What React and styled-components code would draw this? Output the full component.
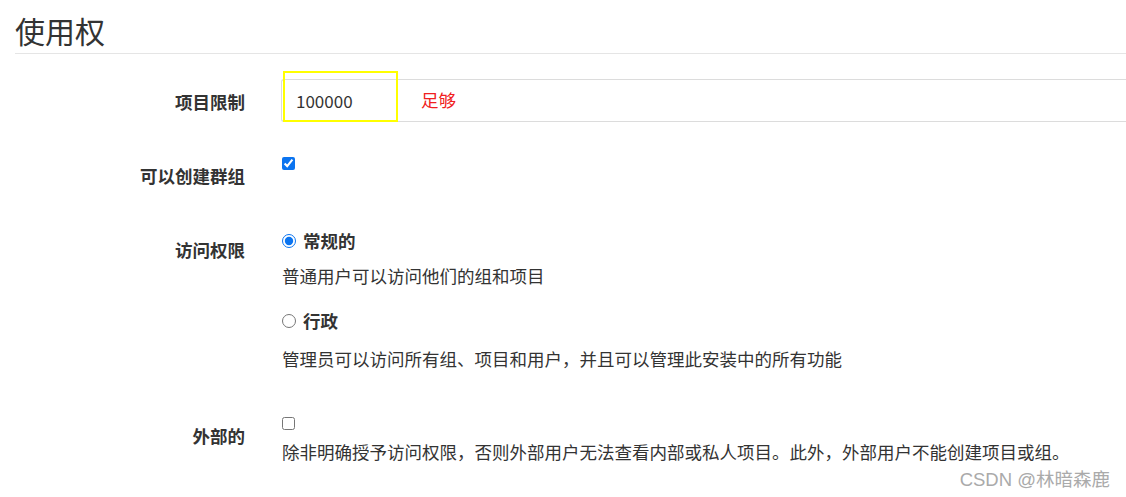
import React from "react"
import styled, { createGlobalStyle } from "styled-components"

const GlobalStyle = createGlobalStyle`
  html, body {
    margin: 0;
    padding: 0;
    background: #fff;
  }
  body {
    font-family: "Noto Sans CJK SC", "Microsoft YaHei", sans-serif;
    color: #333;
    overflow: hidden;
  }
`

const Page = styled.div`
  position: relative;
  width: 1126px;
  height: 497px;
  padding-left: 15px;
  box-sizing: border-box;
`

const Title = styled.h3`
  margin: 0;
  padding-top: 12px;
  height: 41px;
  font-size: 30px;
  line-height: 36px;
  font-weight: 400;
  color: #333;
  border-bottom: 1px solid #e5e5e5;
`

const Form = styled.div`
  display: flex;
  flex-direction: column;
`

const Row = styled.div`
  display: grid;
  grid-template-columns: 230px 1fr;
  column-gap: 37px;
  margin-top: ${props => props.top}px;
`

const Label = styled.div`
  text-align: right;
  font-size: 17.5px;
  line-height: 24px;
  font-weight: 700;
  padding-top: ${props => props.pad}px;
  color: #333;
`

const Controls = styled.div`
  display: flex;
  flex-direction: column;
  align-items: flex-start;
`

const InputWrap = styled.div`
  position: relative;
  display: flex;
  align-items: center;
  width: 100%;
`

const TextInput = styled.div`
  position: relative;
  width: calc(100% + 1px);
  height: 43px;
  box-sizing: border-box;
  border: 1px solid #dcdcdc;
  border-right: none;
  border-radius: 3px 0 0 3px;
  display: flex;
  align-items: center;
  padding-left: 14px;
  margin-left: -1px;
  font-size: 17px;
  color: #333;
`

const Highlight = styled.div`
  position: absolute;
  left: 1px;
  top: -8px;
  width: 115px;
  height: 51px;
  box-sizing: border-box;
  border: 2px solid #ffff00;
  pointer-events: none;
`

const Note = styled.span`
  position: absolute;
  left: 139px;
  top: 9px;
  font-size: 17.5px;
  line-height: 24px;
  color: #f02020;
`

const Check = styled.input`
  margin: 0;
  width: 13px;
  height: 13px;
  accent-color: #0b74f0;
`

const Option = styled.label`
  display: flex;
  align-items: center;
  gap: 7px;
  font-size: 17.5px;
  line-height: 24px;
  font-weight: 700;
  margin-top: ${props => props.top || 0}px;
`

const Radio = styled.input`
  margin: 0;
  width: 14px;
  height: 14px;
  accent-color: #0b74f0;
`

const Help = styled.p`
  margin: ${props => props.top}px 0 0;
  font-size: 17.5px;
  line-height: 24px;
  color: #333;
`

const Watermark = styled.div`
  position: absolute;
  right: 16px;
  bottom: 6px;
  font-family: "Liberation Sans", "Noto Sans CJK SC", sans-serif;
  font-size: 18.5px;
  color: #aaa;
`

const App = () => (
  <Page>
    <GlobalStyle />
    <Title>使用权</Title>
    <Form>
      <Row top={25}>
        <Label pad={11}>项目限制</Label>
        <InputWrap>
          <TextInput>100000</TextInput>
          <Highlight />
          <Note>足够</Note>
        </InputWrap>
      </Row>
      <Row top={35}>
        <Label pad={7}>可以创建群组</Label>
        <Controls>
          <Check type="checkbox" defaultChecked />
        </Controls>
      </Row>
      <Row top={41}>
        <Label pad={9}>访问权限</Label>
        <Controls>
          <Option>
            <Radio type="radio" name="access" defaultChecked />
            常规的
          </Option>
          <Help top={11}>普通用户可以访问他们的组和项目</Help>
          <Option top={21}>
            <Radio type="radio" name="access" />
            行政
          </Option>
          <Help top={14}>管理员可以访问所有组、项目和用户，并且可以管理此安装中的所有功能</Help>
        </Controls>
      </Row>
      <Row top={46}>
        <Label pad={7}>外部的</Label>
        <Controls>
          <Check type="checkbox" />
          <Help top={10}>除非明确授予访问权限，否则外部用户无法查看内部或私人项目。此外，外部用户不能创建项目或组。</Help>
        </Controls>
      </Row>
    </Form>
    <Watermark>CSDN @林暗森鹿</Watermark>
  </Page>
)

export default App
